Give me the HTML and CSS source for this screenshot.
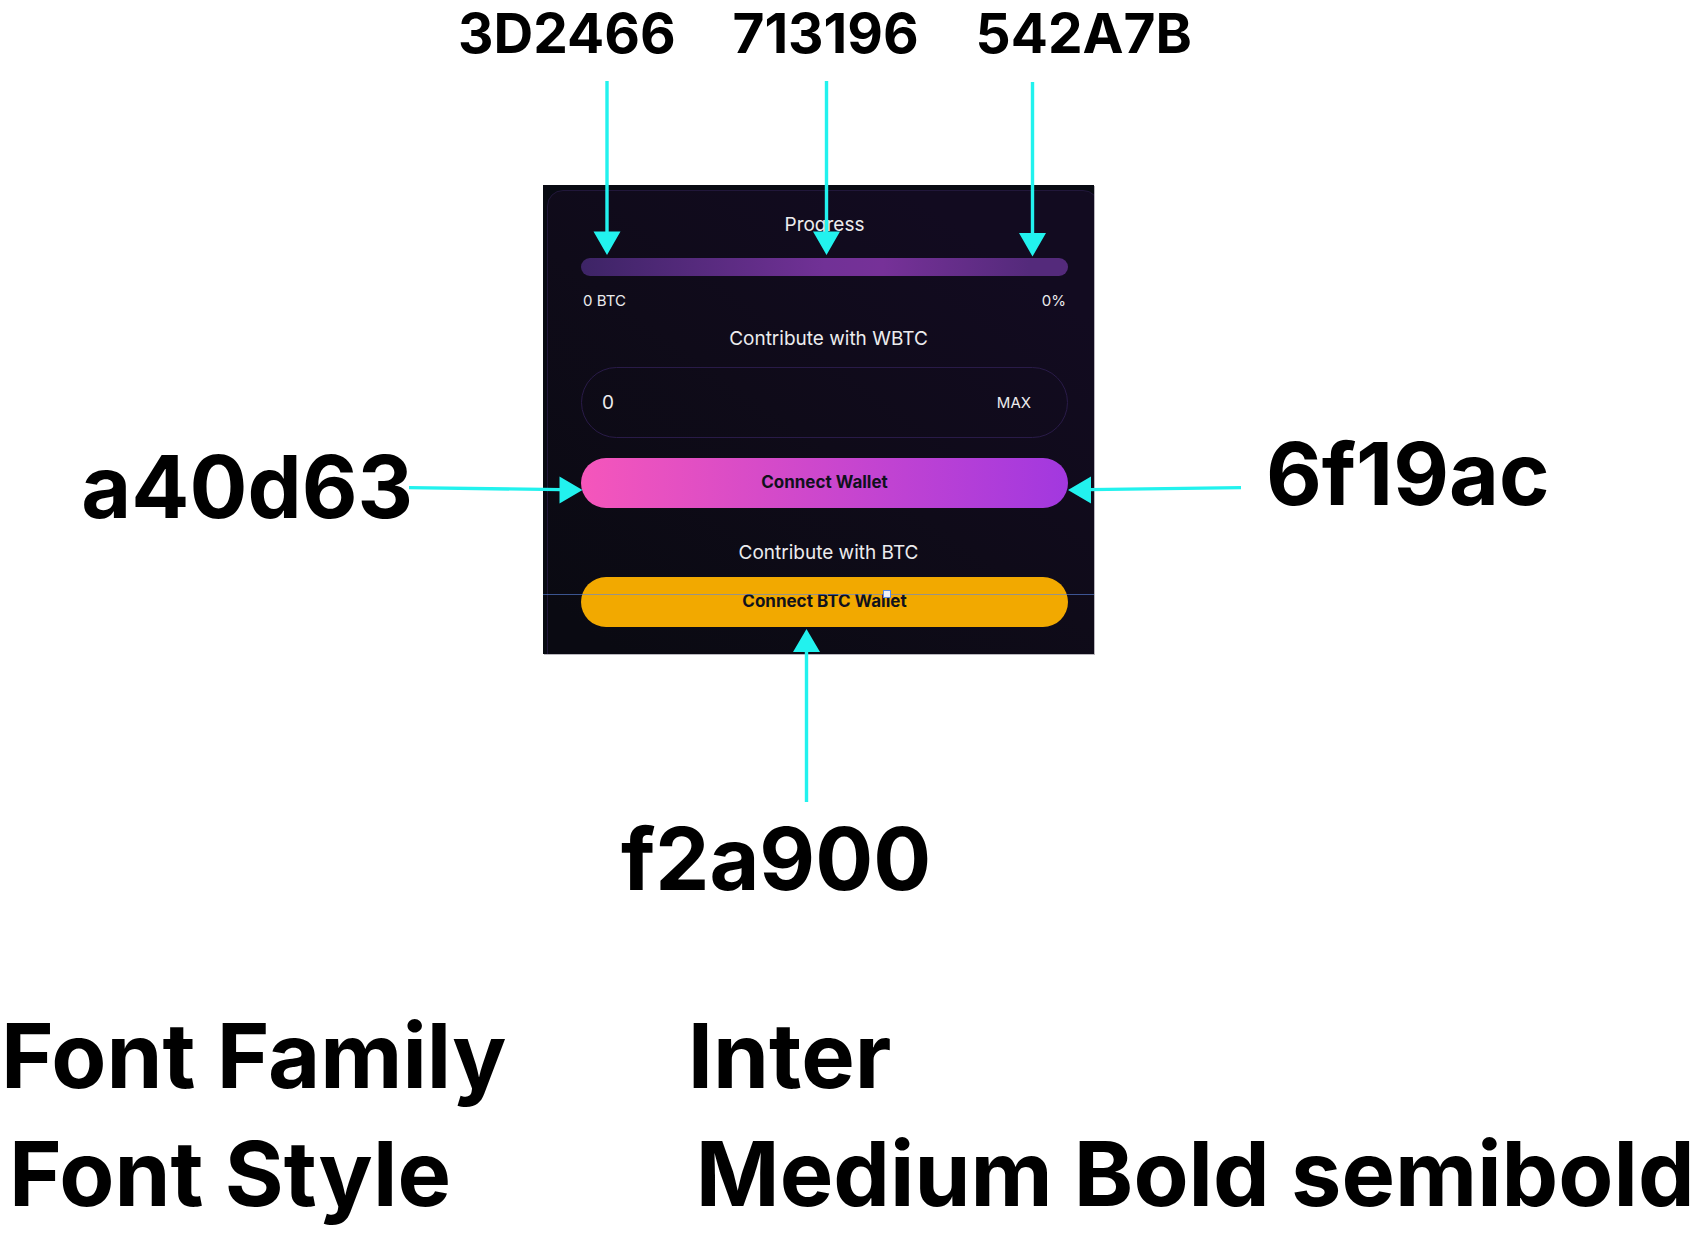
FILE: index.html
```html
<!DOCTYPE html>
<html lang="en">
<head>
<meta charset="utf-8">
<title>Contribution card style guide</title>
<link rel="stylesheet" href="styles.css">
</head>
<body>
<main>
  <section class="board">
    <div class="stops">
      <span>3D2466</span>
      <span>713196</span>
      <span>542A7B</span>
    </div>
    <p class="note note-left">a40d63</p>
    <div class="card-wrap">
      <form class="card">
        <div class="panel"></div>
        <h2 class="heading">Progress</h2>
        <div class="bar" role="progressbar" aria-label="Progress" aria-valuenow="0"></div>
        <div class="legend"><span>0 BTC</span><span>0%</span></div>
        <label class="heading heading-wbtc" for="amount">Contribute with WBTC</label>
        <div class="field">
          <input id="amount" type="text" value="0">
          <button type="button" class="max">MAX</button>
        </div>
        <button type="button" class="pill pill-wallet">Connect Wallet</button>
        <h2 class="heading heading-btc">Contribute with BTC</h2>
        <button type="button" class="pill pill-btc">Connect BTC Wallet</button>
        <div class="guide"><span class="handle"></span></div>
      </form>
      <!-- Arrows share the card's origin and run past its edges -->
      <svg class="arrows" width="551" height="469" viewBox="0 0 551 469" aria-hidden="true">
        <g stroke="#22f2ee" stroke-width="3.4">
          <path d="M64 -104V48M283.5 -104V48M489.5 -103V49M263.5 617V466M-134 302.6L18 304.6M698 302.6L546 304.6"/>
        </g>
        <g fill="#22f2ee">
          <path d="M50.500 46.500h27L64 70zM270 46.500h27L283.500 70zM476 48h27L489.500 71.500zM250 467h27L263.500 444zM16.500 291.500v27L39.500 305zM548 291.500v27L525 305z"/>
        </g>
      </svg>
    </div>
    <p class="note note-right">6f19ac</p>
    <p class="note note-bottom">f2a900</p>
  </section>
  <dl class="spec">
    <dt>Font Family</dt>
    <dd>Inter</dd>
    <dt class="inset">Font Style</dt>
    <dd class="inset">Medium Bold semibold</dd>
  </dl>
</main>
</body>
</html>
```
FILE: styles.css
```css
* {
  box-sizing: border-box;
}

body {
  margin: 0;
  background: #fff;
  color: #000;
  font-family: Inter, sans-serif;
}

p, h2, dl, dd {
  margin: 0;
}

.board {
  display: grid;
  grid-template-columns: 543fr 551px 614fr;
  padding-top: 4px;
}

.stops {
  grid-column: 2;
  display: flex;
  justify-content: space-between;
  margin: 0 -98px 123px -85px;
  font-size: 55px;
  line-height: 58px;
  font-weight: 700;
}

.note {
  font-size: 86px;
  line-height: 96px;
  font-weight: 700;
}

.note-left {
  grid-column: 1;
  justify-self: end;
  padding: 254px 130px 0 0;
}

.note-right {
  padding: 241px 0 0 172px;
}

.note-bottom {
  grid-column: 2;
  padding: 157px 0 0 78px;
}

.card-wrap {
  position: relative;
}

.card {
  position: relative;
  display: flex;
  flex-direction: column;
  padding: 28px 26px 27px 38px;
  overflow: hidden;
  background: #080a12;
  box-shadow: 1px 1px 0 #b9b7bd;
  color: #ececee;
}

.panel {
  position: absolute;
  inset: 5px -5px -40px 4px;
  border: 1px solid #21173a;
  border-radius: 16px;
  background: linear-gradient(35deg, #0a0a12 10%, #0f0b19 50%, #120b20 85%);
}

.card > :not(.panel):not(.guide) {
  position: relative;
}

.heading {
  font-size: 19px;
  line-height: 24px;
  font-weight: 400;
  text-align: center;
}

.bar {
  height: 18px;
  margin-top: 21px;
  border-radius: 9px;
  background: linear-gradient(90deg, #3d2466, #713196 50%, #763198 62%, #542a7b 92%);
}

.legend {
  display: flex;
  justify-content: space-between;
  margin: 15px 0 16px;
  padding: 0 2px;
  font-size: 15px;
  line-height: 20px;
}

.heading-wbtc {
  padding-left: 8px;
}

.field {
  display: flex;
  align-items: center;
  height: 71px;
  margin: 16px 0 20px;
  padding: 0 36px 0 20px;
  border: 1px solid #291b48;
  border-radius: 36px;
}

.field input {
  flex: 1;
  min-width: 0;
  padding: 0;
  border: 0;
  background: none;
  color: inherit;
  font: 400 19px/24px Inter, sans-serif;
}

.max {
  padding: 0;
  border: 0;
  background: none;
  color: inherit;
  font: 400 15px/20px Inter, sans-serif;
}

.pill {
  height: 50px;
  padding: 0 0 3px;
  border: 0;
  border-radius: 25px;
  color: #10111c;
  font: 700 17px/24px Inter, sans-serif;
}

.pill-wallet {
  background: linear-gradient(90deg, #f556bb, #a238df);
}

.heading-btc {
  margin: 33px 0 12px;
  padding-left: 8px;
}

.pill-btc {
  background: #f2a900;
}

.guide {
  position: absolute;
  top: 409px;
  left: 0;
  right: 0;
  height: 1px;
  background: rgba(92, 134, 226, 0.6);
}

.handle {
  position: absolute;
  top: -4px;
  left: 340px;
  width: 8px;
  height: 8px;
  border: 1px solid #5c8ee6;
  background: #f2f2f4;
}

.arrows {
  position: absolute;
  inset: 0;
  overflow: visible;
  pointer-events: none;
}

.spec {
  display: grid;
  grid-template-columns: 2fr 3fr;
  row-gap: 2px;
  margin-top: 91px;
  padding-left: 1px;
  font-size: 90px;
  line-height: 116px;
  font-weight: 700;
  white-space: nowrap;
}

.spec dd {
  padding-left: 4px;
}

.spec .inset {
  padding-left: 8px;
}

.spec dd.inset {
  padding-left: 12px;
}
```
